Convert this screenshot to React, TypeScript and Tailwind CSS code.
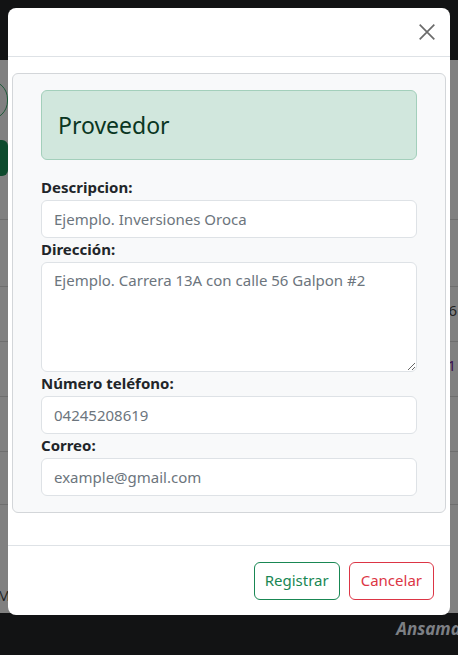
import React from "react";

const font = { fontFamily: '"Noto Sans", "Open Sans", sans-serif' };

function BackgroundPage() {
  return (
    <div className="flex h-[655px] w-[458px] flex-col bg-[#808080]">
      <header className="h-[60px] shrink-0 bg-[#121314]" />
      <main className="relative flex min-h-0 flex-1 flex-col">
        <div className="h-[160px] shrink-0 border-b border-[#6e6e6e]">
          <div className="ml-[-30px] mt-[20px] h-[40px] w-[38px] rounded-full border border-[#1f5a3a]" />
          <div className="ml-[-30px] mt-[20px] h-[36px] w-[38px] rounded-md bg-[#0d4a2d]" />
        </div>
        <div className="h-[67px] shrink-0 border-b border-[#6e6e6e]" />
        <div className="flex h-[55px] shrink-0 items-center justify-end border-b border-[#6e6e6e] pb-[8px] pr-[1px] text-[15px] text-[#222]">
          6
        </div>
        <div className="flex h-[55px] shrink-0 items-center justify-end border-b border-[#6e6e6e] pb-[8px] pr-[2px] text-[15px] text-[#3b1050]">
          1
        </div>
        <div className="h-[55px] shrink-0 border-b border-[#6e6e6e]" />
        <div className="h-[53px] shrink-0 border-b border-[#6e6e6e]" />
        <div className="flex flex-1 items-end pb-[7px] text-[15px] text-[#222]">
          <span className="ml-[-3px]">M</span>
        </div>
      </main>
      <footer className="flex h-[42px] shrink-0 items-start justify-end bg-[#121314] pt-[3px]">
        <span className="mr-[-10px] text-[17px] font-bold italic text-[#7c7f84]">Ansamar</span>
      </footer>
    </div>
  );
}

function Field({
  label,
  placeholder,
}: {
  label: string;
  placeholder: string;
}) {
  return (
    <div className="flex flex-col">
      <label className="h-[24px] text-[15px] font-bold leading-[22px] text-[#212529]">
        {label}
      </label>
      <input
        type="text"
        placeholder={placeholder}
        className="h-[38px] w-full rounded-[6px] border border-[#dee2e6] bg-white px-[12px] text-[15px] text-[#212529] outline-none placeholder:text-[#6c757d]"
      />
    </div>
  );
}

function ProveedorModal() {
  return (
    <div
      className="absolute left-[8px] top-[8px] flex h-[607px] w-[442px] flex-col rounded-[8px] bg-white"
      style={font}
    >
      <div className="flex h-[49px] shrink-0 items-center justify-end border-b border-[#dee2e6] pr-[11px]">
        <button type="button" aria-label="Cerrar" className="flex h-[24px] w-[24px] items-center justify-center">
          <svg width="18" height="18" viewBox="0 0 16 16" fill="none" stroke="#6b6b6b" strokeWidth="1.5">
            <path d="M1.5 1.5 L14.5 14.5 M14.5 1.5 L1.5 14.5" />
          </svg>
        </button>
      </div>

      <div className="flex-1 px-[4px] pt-[16px]">
        <div className="flex flex-col rounded-[6px] border border-[#d3d6d9] bg-[#f8f9fa] px-[28px] pb-[16px] pt-[16px]">
          <div className="mb-[16px] flex h-[70px] items-center rounded-[6px] border border-[#a3cfbb] bg-[#d1e7dd] px-[16px]">
            <h3 className="text-[23px] font-normal text-[#0a3622]">Proveedor</h3>
          </div>

          <Field label="Descripcion:" placeholder="Ejemplo. Inversiones Oroca" />

          <div className="flex flex-col">
            <label className="h-[24px] text-[15px] font-bold leading-[22px] text-[#212529]">
              Dirección:
            </label>
            <textarea
              placeholder="Ejemplo. Carrera 13A con calle 56 Galpon #2"
              className="h-[110px] w-full rounded-[6px] border border-[#dee2e6] bg-white px-[12px] py-[6px] text-[15px] text-[#212529] outline-none placeholder:text-[#6c757d]"
            />
          </div>

          <Field label="Número teléfono:" placeholder="04245208619" />
          <Field label="Correo:" placeholder="example@gmail.com" />
        </div>
      </div>

      <div className="flex h-[70px] shrink-0 items-center justify-end gap-[9px] border-t border-[#dee2e6] px-[16px]">
        <button
          type="button"
          className="h-[38px] rounded-[6px] border border-[#198754] px-[10px] text-[15px] text-[#198754]"
        >
          Registrar
        </button>
        <button
          type="button"
          className="h-[38px] rounded-[6px] border border-[#dc3545] px-[11px] text-[15px] text-[#dc3545]"
        >
          Cancelar
        </button>
      </div>
    </div>
  );
}

export default function App() {
  return (
    <div className="relative h-[655px] w-[458px] overflow-hidden" style={font}>
      <BackgroundPage />
      <ProveedorModal />
    </div>
  );
}
